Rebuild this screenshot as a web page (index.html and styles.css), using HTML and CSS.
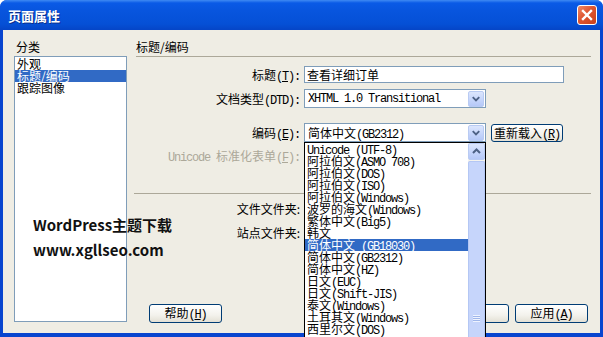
FILE: index.html
```html
<!DOCTYPE html>
<html lang="zh-CN">
<head>
  <meta charset="UTF-8">
  <meta name="viewport" content="width=device-width, initial-scale=1.0">
  <title>页面属性</title>
  <link rel="stylesheet" href="styles.css">
</head>
<body>
  <div class="window">
    <div class="titlebar">
      <span class="title">页面属性</span>
      <button class="close" title="关闭">
        <svg width="18" height="18" viewBox="0 0 18 18"><path d="M5 5 L13 13 M13 5 L5 13" stroke="#fff" stroke-width="2.4" stroke-linecap="square"/></svg>
      </button>
    </div>

    <div class="content">
      <div class="category">
        <div class="cat-label">分类</div>
        <ul class="listbox">
          <li>外观</li>
          <li class="selected">标题/编码</li>
          <li>跟踪图像</li>
        </ul>
      </div>

      <div class="panel">
        <div class="panel-title">标题/编码</div>

        <div class="field r1">
          <label>标题<span class="en">(<u>T</u>):</span></label>
          <input class="textbox" type="text" value="查看详细订单">
        </div>

        <div class="field r2">
          <label>文档类型<span class="en">(DTD):</span></label>
          <div class="combo">
            <span class="combo-text en">XHTML 1.0 Transitional</span>
            <span class="combo-btn">
              <svg width="15" height="15" viewBox="0 0 15 15"><path d="M4 6 L7.5 9.5 L11 6" fill="none" stroke="#4d6185" stroke-width="2"/></svg>
            </span>
          </div>
        </div>

        <div class="field r3">
          <label>编码<span class="en">(<u>E</u>):</span></label>
          <div class="combo open">
            <span class="combo-text">简体中文<span class="en">(GB2312)</span></span>
            <span class="combo-btn">
              <svg width="15" height="15" viewBox="0 0 15 15"><path d="M4 6 L7.5 9.5 L11 6" fill="none" stroke="#4d6185" stroke-width="2"/></svg>
            </span>

            <div class="dropdown">
              <ul class="options">
                <li><span class="en">Unicode (UTF-8)</span></li>
                <li>阿拉伯文<span class="en">(ASMO 708)</span></li>
                <li>阿拉伯文<span class="en">(DOS)</span></li>
                <li>阿拉伯文<span class="en">(ISO)</span></li>
                <li>阿拉伯文<span class="en">(Windows)</span></li>
                <li>波罗的海文<span class="en">(Windows)</span></li>
                <li>繁体中文<span class="en">(Big5)</span></li>
                <li>韩文</li>
                <li class="selected">简体中文<span class="en"> (GB18030)</span></li>
                <li>简体中文<span class="en">(GB2312)</span></li>
                <li>简体中文<span class="en">(HZ)</span></li>
                <li>日文<span class="en">(EUC)</span></li>
                <li>日文<span class="en">(Shift-JIS)</span></li>
                <li>泰文<span class="en">(Windows)</span></li>
                <li>土耳其文<span class="en">(Windows)</span></li>
                <li>西里尔文<span class="en">(DOS)</span></li>
              </ul>
              <div class="scrollbar">
                <span class="sb-up">
                  <svg width="15" height="15" viewBox="0 0 15 15"><path d="M4 9 L7.5 5.5 L11 9" fill="none" stroke="#4d6185" stroke-width="2"/></svg>
                </span>
                <span class="sb-thumb"><span class="grip"></span></span>
              </div>
            </div>
          </div>
          <button class="btn reload">重新载入<span class="en">(<u>R</u>)</span></button>
        </div>

        <div class="field r4 disabled">
          <label><span class="en">Unicode </span>标准化表单<span class="en">(<u>F</u>):</span></label>
        </div>

        <div class="sep"></div>

        <div class="field f1">
          <label>文件文件夹:</label>
        </div>
        <div class="field f2">
          <label>站点文件夹:</label>
        </div>

        <div class="footer">
          <button class="btn help">帮助<span class="en">(<u>H</u>)</span></button>
          <div class="actions">
            <button class="btn">确定</button>
            <button class="btn">取消</button>
            <button class="btn">应用<span class="en">(<u>A</u>)</span></button>
          </div>
        </div>
      </div>
    </div>

    <div class="watermark">
      <div>WordPress主题下载</div>
      <div>www.xgllseo.com</div>
    </div>
  </div>
</body>
</html>
```

FILE: styles.css
```css
* {
  box-sizing: border-box;
}
body {
  margin: 0;
  width: 603px;
  height: 337px;
  overflow: hidden;
  font-family: "Noto Sans CJK SC", sans-serif;
  font-size: 12px;
  color: #000;
  background: #fff;
}
ul {
  list-style: none;
  margin: 0;
  padding: 0;
}
.en {
  font-family: "Liberation Mono", monospace;
  font-size: 12px;
  letter-spacing: -1.2px;
}

/* window frame */
.window {
  position: relative;
  width: 603px;
  height: 337px;
  display: flex;
  flex-direction: column;
  background: #0845cf;
  border-radius: 7px 7px 0 0;
}
.titlebar {
  height: 30px;
  display: flex;
  align-items: center;
  justify-content: space-between;
  padding: 0 6px 0 8px;
  border-radius: 7px 7px 0 0;
  background: linear-gradient(#3f8af3 0, #0a5ae6 3px, #0855de 35%, #0550d6 80%, #0545c7 100%);
}
.title {
  color: #fff;
  font-weight: bold;
  font-size: 13px;
  text-shadow: 1px 1px 0 #0b2f8c;
}
.close {
  width: 20px;
  height: 20px;
  padding: 0;
  display: flex;
  align-items: center;
  justify-content: center;
  border: 1px solid #fff;
  border-radius: 3px;
  background: linear-gradient(135deg, #ef8a66, #de5530 45%, #c9401a);
}

.content {
  flex: 1;
  margin: 0 3px 4px;
  display: flex;
  gap: 9px;
  padding: 10px 9px 10px 11px;
  background: #efede4;
}

/* category list */
.category {
  width: 113px;
}
.cat-label {
  line-height: 14px;
  padding-left: 2px;
  margin-bottom: 2px;
}
.listbox {
  height: 266px;
  border: 1px solid #7f9db9;
  background: #fff;
  padding-top: 1px;
}
.listbox li {
  line-height: 12px;
  height: 12px;
  padding-left: 2px;
}
.listbox .selected,
.options .selected {
  background: #316ac5;
  color: #fff;
}

/* right panel */
.panel {
  width: 455px;
  display: flex;
  flex-direction: column;
}
.panel-title {
  line-height: 14px;
  padding-bottom: 2px;
  border-bottom: 1px solid #aca899;
}
.field {
  display: flex;
  align-items: center;
}
.field label {
  width: 164px;
  margin-right: 4px;
  text-align: right;
}
.r1 { margin-top: 9px; height: 17px; }
.r2 { margin-top: 6px; height: 19px; }
.r3 { margin-top: 15px; height: 19px; }
.r4 { margin-top: 8px; height: 14px; line-height: 14px; }
.f1 { margin-top: 8px; height: 14px; line-height: 14px; }
.f2 { margin-top: 10px; height: 14px; line-height: 14px; }
.disabled {
  color: #aca899;
}
.sep {
  margin: 29px 0 0 -2px;
  height: 1px;
  background: #aca899;
}

.textbox {
  width: 260px;
  height: 17px;
  padding: 0 2px;
  border: 1px solid #7f9db9;
  font: inherit;
  background: #fff;
}

.combo {
  position: relative;
  width: 182px;
  height: 19px;
  display: flex;
  align-items: center;
  padding: 1px;
  border: 1px solid #7f9db9;
  background: #fff;
}
.combo-text {
  flex: 1;
  padding-left: 2px;
  white-space: nowrap;
}
.combo-btn,
.sb-up {
  width: 16px;
  height: 16px;
  display: flex;
  align-items: center;
  justify-content: center;
  border: 1px solid #b9cbf3;
  border-radius: 2px;
  background: linear-gradient(#dce6fd, #c4d4fb 60%, #b5c8f7);
}

/* open encoding list */
.dropdown {
  position: absolute;
  z-index: 10;
  top: 18px;
  left: -1px;
  width: 182px;
  height: 196px;
  overflow: hidden;
  border: 1px solid #000;
  border-bottom: 0;
  background: #fff;
  display: flex;
}
.options {
  flex: 1;
}
.options li {
  height: 12px;
  line-height: 12px;
  padding-left: 2px;
  white-space: nowrap;
}
.scrollbar {
  width: 17px;
  display: flex;
  flex-direction: column;
  background: #f4f3ee;
}
.sb-up {
  width: 17px;
  height: 17px;
}
.sb-thumb {
  flex: 1;
  margin-top: 1px;
  border: 1px solid #b4c7f4;
  border-bottom: 0;
  border-radius: 2px 2px 0 0;
  background: #c6d5fb;
  display: flex;
  justify-content: center;
  padding-top: 153px;
}
.grip {
  width: 7px;
  height: 7px;
  background: repeating-linear-gradient(#eef3ff 0 1px, #9fb6ea 1px 2px);
}

/* buttons */
.btn {
  height: 19px;
  width: 73px;
  padding: 0;
  border: 1px solid #003c74;
  border-radius: 3px;
  font: inherit;
  line-height: 16px;
  color: #000;
  background: linear-gradient(#ffffff, #f3f2ec 60%, #e3e0d5);
}
.reload {
  width: 72px;
  height: 18px;
  margin-left: 5px;
}
.footer {
  margin-top: auto;
  display: flex;
  justify-content: space-between;
  padding-left: 13px;
  padding-right: 3px;
}
.actions {
  display: flex;
  gap: 6px;
}

.watermark {
  position: absolute;
  left: 33px;
  top: 212px;
  font-size: 15px;
  font-weight: bold;
  line-height: 25px;
  color: #111;
}
```
